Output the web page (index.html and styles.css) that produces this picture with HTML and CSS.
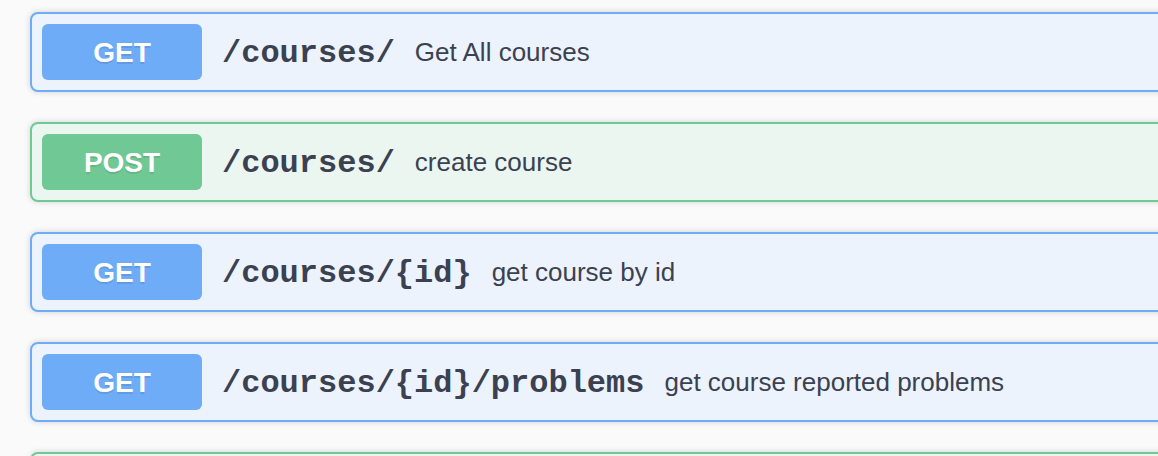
FILE: index.html
```html
<!DOCTYPE html>
<html>
<head>
<meta charset="utf-8">
<link rel="stylesheet" href="styles.css">
</head>
<body>
<div class="ops">
  <div class="opblock get">
    <span class="method">GET</span>
    <span class="path">/courses/</span>
    <span class="desc">Get All courses</span>
  </div>
  <div class="opblock post">
    <span class="method">POST</span>
    <span class="path">/courses/</span>
    <span class="desc">create course</span>
  </div>
  <div class="opblock get">
    <span class="method">GET</span>
    <span class="path">/courses/{id}</span>
    <span class="desc">get course by id</span>
  </div>
  <div class="opblock get">
    <span class="method">GET</span>
    <span class="path">/courses/{id}/problems</span>
    <span class="desc">get course reported problems</span>
  </div>
  <div class="opblock post"></div>
</div>
</body>
</html>
```
FILE: styles.css
```css
html, body {
  margin: 0;
  padding: 0;
  background: #fafafa;
  overflow: hidden;
  height: 456px;
}
.ops {
  padding: 12px 0 0 30px;
  width: 1200px;
  display: flex;
  flex-direction: column;
  gap: 30px;
}
.opblock {
  display: flex;
  align-items: center;
  flex: none;
  box-sizing: border-box;
  height: 80px;
  padding: 0 10px;
  border: 2px solid #6eacf8;
  border-radius: 8px;
  background: #ecf3fc;
  box-shadow: 0 0 6px rgba(0,0,0,0.16);
}
.opblock.post {
  border-color: #70c894;
  background: #ecf6f1;
}
.method {
  width: 160px;
  height: 56px;
  flex: none;
  display: flex;
  align-items: center;
  justify-content: center;
  border-radius: 6px;
  background: #6eacf8;
  color: #fff;
  font-family: "Liberation Sans", Arial, sans-serif;
  font-weight: bold;
  font-size: 28px;
  padding-top: 2px;
  box-sizing: border-box;
  text-shadow: 0 2px 0 rgba(0,0,0,0.1);
}
.post .method {
  background: #70c894;
}
.path {
  padding: 2px 20px 0;
  font-family: "Liberation Mono", "Courier New", monospace;
  font-weight: bold;
  font-size: 32px;
  color: #3b4151;
  white-space: nowrap;
}
.desc {
  font-family: "Liberation Sans", Arial, sans-serif;
  font-size: 26px;
  color: #3b4151;
  white-space: nowrap;
}
```
